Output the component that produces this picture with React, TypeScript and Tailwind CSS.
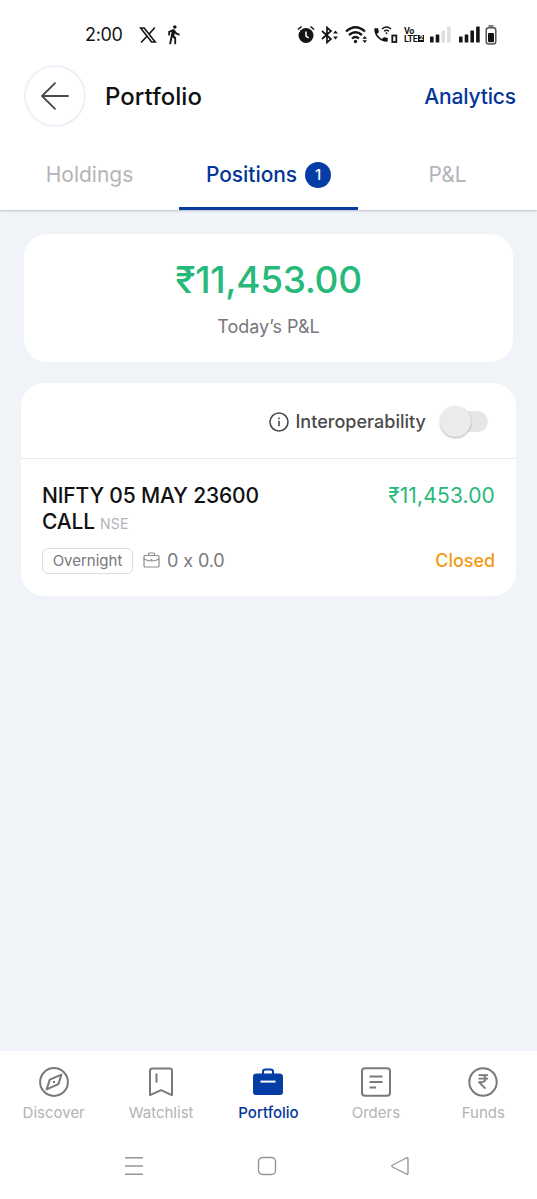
import type { ReactNode } from "react";
import { MdDirectionsWalk, MdPhone } from "react-icons/md";

const tabs = [
  { label: "Holdings", active: false },
  { label: "Positions", active: true, count: 1 },
  { label: "P&L", active: false },
];

export default function App() {
  return (
    <div className="flex h-[1199px] w-[537px] flex-col overflow-hidden bg-[#f0f4f9] font-['Inter',sans-serif]">
      <header className="z-10 h-[210px] shrink-0 bg-white shadow-[0_1px_2px_rgba(0,0,0,0.22)]">
        <StatusBar />
        <div className="flex h-[62px] items-center pl-6 pr-[21px]">
          <button className="flex size-[62px] items-center justify-center rounded-full border-2 border-[#eaf1f8]">
            <svg width="30" height="30" viewBox="0 0 30 30" fill="none" stroke="#4a4a4d" strokeWidth="1.8" strokeLinecap="round" strokeLinejoin="round">
              <path d="M28 15H2M15 2.2 2 15l13 12.8" />
            </svg>
          </button>
          <h1 className="ml-[19px] flex-1 pt-[2px] text-[24px] font-medium tracking-[0.05px] text-[#111]">Portfolio</h1>
          <a className="pt-[2px] text-[21px] font-medium tracking-[-0.15px] text-[#04369a]">Analytics</a>
        </div>
        <nav className="grid h-[83px] grid-cols-3">
          {tabs.map((tab) => (
            <div
              key={tab.label}
              className={
                tab.active
                  ? "flex items-center justify-center border-b-[3px] border-[#0a3ca0] pt-[15px] text-[21px] font-medium tracking-[-0.05px] text-[#04369a]"
                  : "flex items-center justify-center pt-3 text-[21px] text-[#b2b4b8]"
              }
            >
              {tab.label}
              {tab.count && (
                <span className="ml-2 flex size-[26px] items-center justify-center rounded-full bg-[#043da6] pt-px text-[15px] font-medium text-white">
                  {tab.count}
                </span>
              )}
            </div>
          ))}
        </nav>
      </header>

      <main className="flex-1">
        <section className="mx-6 mt-[24px] flex h-[128px] flex-col items-center rounded-[23px] bg-white">
          <p className="mt-[22px] text-[37px] font-medium leading-[48px] tracking-[-0.35px] text-[#27b97a]">₹11,453.00</p>
          <p className="mt-[11px] text-[18px] leading-6 text-[#77787b]">Today’s P&amp;L</p>
        </section>

        <section className="mx-[21px] mt-[21px] h-[213px] rounded-[23px] bg-white">
          <div className="flex h-[76px] items-center justify-end border-b border-[#e6ebee] pr-[28px] pt-[2px]">
            <svg width="20" height="20" viewBox="0 0 20 20" fill="none" stroke="#4a4a4c" strokeWidth="1.6">
              <circle cx="10" cy="10" r="9" />
              <path d="M10 8.8v5.4M10 5.4v1.8" />
            </svg>
            <span className="ml-[6px] text-[18px] font-medium tracking-[0.03px] text-[#4a4a4c]">Interoperability</span>
            <Toggle />
          </div>
          <div className="px-[21px] pt-6">
            <div className="flex items-start justify-between">
              <h2 className="w-[240px] text-[21px] font-medium leading-[26px] tracking-[-0.15px] text-[#111]">
                NIFTY 05 MAY 23600 CALL
                <span className="ml-[5px] inline-block text-[14px] font-normal leading-4 tracking-[0.2px] text-[#b2b4b8]">NSE</span>
              </h2>
              <p className="text-[21px] leading-[26px] tracking-[0.15px] text-[#27b97a]">₹11,453.00</p>
            </div>
            <div className="mt-[12px] flex h-[27px] items-center text-[#77787b]">
              <span className="flex h-[26px] w-[91px] items-center justify-center rounded-[6px] border-[1.5px] border-[#dcdde0] pt-px text-[15px]">
                Overnight
              </span>
              <BriefcaseOutline />
              <span className="ml-[7px] text-[18px] tracking-[-0.1px]">0 x 0.0</span>
              <span className="ml-auto text-[18px] font-medium tracking-[-0.05px] text-[#f29b12]">Closed</span>
            </div>
          </div>
        </section>
      </main>

      <footer className="h-[148px] shrink-0 bg-white">
        <nav className="grid h-[76px] grid-cols-5">
          <NavItem label="Discover">
            <circle cx="16" cy="16" r="13.9" />
            <path d="m23.4 8.6-3 9.6-11.8 5.2 3.2-9.8zM16 15v2" />
          </NavItem>
          <NavItem label="Watchlist">
            <path d="M7.4 2.5h17.2q2.4 0 2.4 2.4v24.3L16 24.1 5 29.2V4.9q0-2.4 2.4-2.4zM11.5 7.5v9" />
          </NavItem>
          <NavItem label="Portfolio" active>
            <path d="M11 8V5.8q0-2.3 2.3-2.3h5.4q2.3 0 2.3 2.3V8" />
            <path d="M4.5 7.5h23q3.5 0 3.5 3.5v15q0 3-3 3H4q-3 0-3-3V11q0-3.5 3.5-3.5z" fill="#043da6" stroke="none" />
            <path d="M8.5 15.6h15" stroke="white" />
          </NavItem>
          <NavItem label="Orders">
            <rect x="2" y="2.2" width="28" height="27.5" rx="3" />
            <path d="M9.5 10.5h13M9.5 16h13M9.5 21.5H16" />
          </NavItem>
          <NavItem label="Funds">
            <circle cx="16" cy="16" r="13.7" />
            <path d="M11.5 9.2H21M11.5 12.700H21M12 9.200h2.500q4 .5 4 3.500t-4 3.500H12l6.500 6.500" strokeWidth="1.8" />
          </NavItem>
        </nav>
        <SystemNav />
      </footer>
    </div>
  );
}

function Toggle() {
  return (
    <span className="relative ml-[15px] flex h-[21px] w-[47px] rounded-full bg-[#e5e6e8]">
      <span className="absolute -left-[1px] -top-[5px] size-[31px] rounded-full bg-[#ebebeb] shadow-[0_1px_2px_rgba(0,0,0,0.3)]" />
    </span>
  );
}

function BriefcaseOutline() {
  return (
    <svg className="ml-[10px]" width="17" height="17" viewBox="0 0 17 17" fill="none" stroke="#8d8e91" strokeWidth="1.2">
      <rect x="1" y="3.5" width="15" height="11.5" rx="1" />
      <path d="M5.5 3.5V2q0-1 1-1h4q1 0 1 1v1.5M1 7q7.5 4 15 0M7.7 7.7h1.6" />
    </svg>
  );
}

function NavItem({ label, active, children }: { label: string; active?: boolean; children: ReactNode }) {
  return (
    <div className="flex flex-col items-center pt-[15px]">
      <svg width="32" height="32" viewBox="0 0 32 32" fill="none" stroke={active ? "#043da6" : "#78797c"} strokeWidth="2" strokeLinejoin="round">
        {children}
      </svg>
      <span
        className={
          active
            ? "mt-[5px] text-[15px] font-medium leading-5 text-[#04369a]"
            : "mt-[5px] text-[15px] leading-5 text-[#b2b4b8]"
        }
      >
        {label}
      </span>
    </div>
  );
}

function SystemNav() {
  return (
    <div className="flex h-[78px] items-center justify-between pl-[124px] pr-[127px]">
      <svg width="20" height="20" viewBox="0 0 20 20" stroke="#959595" strokeWidth="1.5">
        <path d="M1 1.7h18M1 10h18M1 18.3h18" />
      </svg>
      <svg width="20" height="20" viewBox="0 0 20 20" fill="none" stroke="#959595" strokeWidth="1.4">
        <rect x="1.5" y="1.5" width="17" height="17" rx="4" />
      </svg>
      <svg width="20" height="20" viewBox="0 0 20 20" fill="none" stroke="#959595" strokeWidth="1.4" strokeLinejoin="round">
        <path d="M18 3v14q0 1.7-1.6 1L2.6 11q-1.6-1 0-2L16.4 2q1.6-.7 1.6 1z" />
      </svg>
    </div>
  );
}

function StatusBar() {
  return (
    <div className="flex h-[65px] items-center pb-px pl-[85px] pr-[40px] pt-[5px] text-[#151515]">
      <span className="w-[54px] text-[18px] tracking-[-0.3px]">2:00</span>
      <svg width="18" height="18" viewBox="0 0 18 18" fill="none" stroke="currentColor" strokeWidth="1.6">
        <path d="M1.6 2h3.6l11 14h-3.600zM15.800 1.500 10.200 8M7.600 10.700 2 16.500" />
      </svg>
      <MdDirectionsWalk className="ml-[6px] size-[21px]" />

      <div className="ml-auto flex items-center">
        {/* alarm */}
        <svg width="18" height="19" viewBox="0 0 18 19" fill="none">
          <circle cx="9" cy="10.5" r="7.5" fill="currentColor" />
          <path d="M1 4.5 4.5 1.5M13.5 1.5 17 4.5" stroke="currentColor" strokeWidth="1.6" />
          <path d="M9 6.5V11l2.7 1.8" stroke="white" strokeWidth="1.5" />
        </svg>
        {/* bluetooth */}
        <svg className="ml-[6px]" width="18" height="18" viewBox="0 0 18 18" fill="none">
          <path d="M1 5l9 8-4 3.500v-15L10 5l-9 8" stroke="currentColor" strokeWidth="1.7" />
          <path d="m14.500 4.500 2.500 3h-5zM12 10.500h5l-2.500 3z" fill="currentColor" />
        </svg>
        {/* wifi */}
        <svg className="ml-[6px]" width="23" height="19" viewBox="0 0 23 19" fill="none" stroke="currentColor" strokeWidth="2.3">
          <path d="M1 6.500q9.500-8.500 19 0M4 10q6.500-5.500 13 0M7 13.500q3.500-3 7 0" />
          <circle cx="10.5" cy="16.5" r="1.7" fill="currentColor" stroke="none" />
          <path d="m19.700 11 2.300 2.800h-4.600zM17.400 15.200H22L19.700 18z" fill="currentColor" stroke="none" />
        </svg>
        {/* wifi calling */}
        <span className="relative ml-[6px] h-[19px] w-[24px]">
          <MdPhone className="absolute -left-[2px] top-px size-[18px]" />
          <svg className="absolute left-[7px] top-0" width="17" height="19" viewBox="0 0 17 19" fill="none" stroke="currentColor" strokeWidth="1.4">
            <path d="M1 4q4.500-4 9 0M3 6.300q2.500-2 5 0M5.500 7.300V9" />
            <rect x="11.3" y="10.5" width="4" height="6.5" strokeWidth="1.8" />
          </svg>
        </span>
        <span className="ml-[6px] flex w-[20px] flex-col font-['Roboto',sans-serif] text-[9px] font-bold leading-[8px] tracking-[-0.4px]">
          <span>Vo</span>
          <span className="flex items-center">
            LTE<span className="ml-px bg-[#151515] px-px text-[7px] leading-[7px] text-white">2</span>
          </span>
        </span>
        <SignalBars className="ml-[5px]" dimFrom={2} />
        <SignalBars className="ml-[7px]" dimFrom={4} />
        {/* battery */}
        <svg className="ml-[5px]" width="12" height="20" viewBox="0 0 12 20" fill="none">
          <path d="M3.5 1h5" stroke="#555" strokeWidth="1.5" />
          <rect x="1.2" y="2.7" width="9.6" height="16.3" rx="2.5" stroke="#555" strokeWidth="1.5" />
          <rect x="3" y="8" width="6" height="9.3" rx="1" fill="currentColor" />
        </svg>
      </div>
    </div>
  );
}

function SignalBars({ className, dimFrom }: { className: string; dimFrom: number }) {
  const heights = [6, 8, 12, 16];
  return (
    <svg className={className} width="22" height="17" viewBox="0 0 22 17">
      {heights.map((h, i) => (
        <rect key={h} x={1 + i * 5.7} y={16.5 - h} width="3.6" height={h} rx="0.5" fill={i < dimFrom ? "#151515" : "#dedede"} />
      ))}
    </svg>
  );
}
